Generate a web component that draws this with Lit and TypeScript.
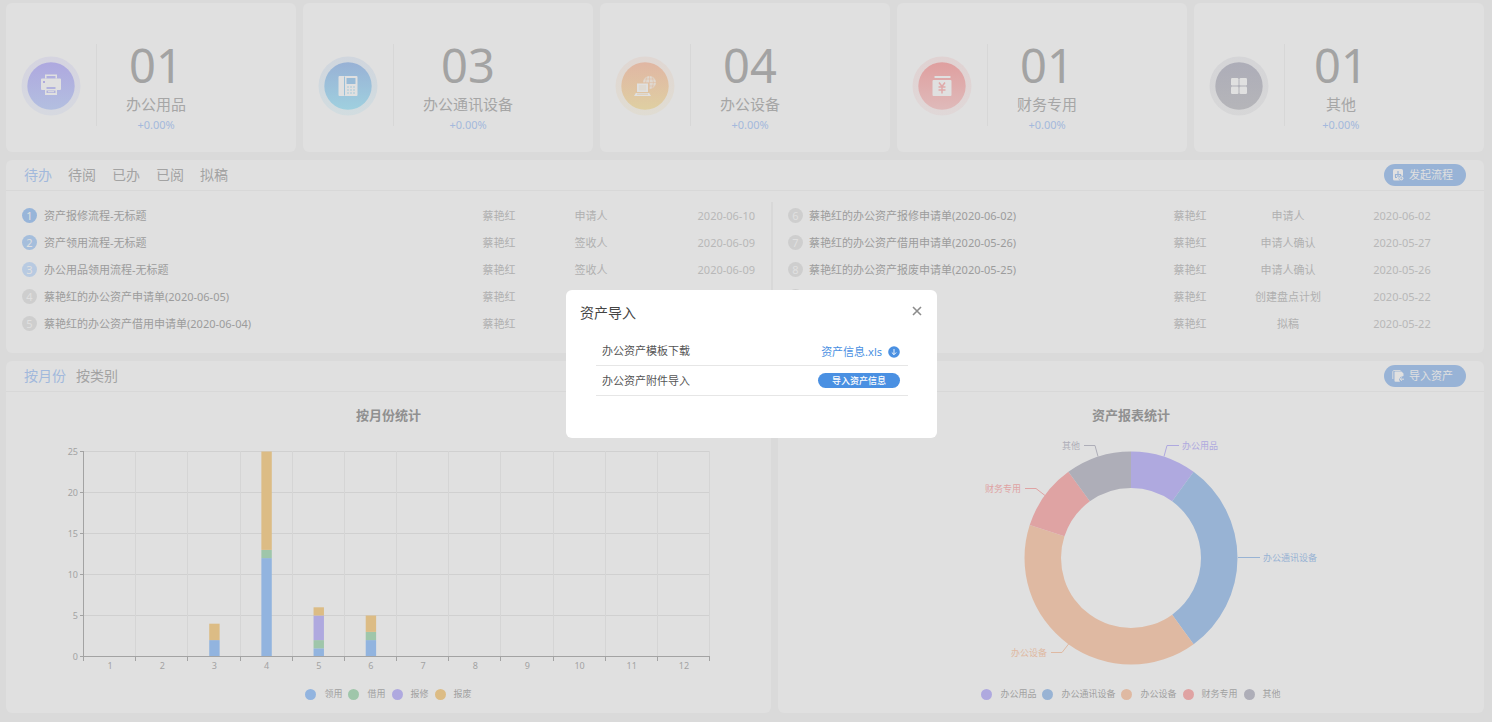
import { LitElement, html, svg, css } from "lit";
import { customElement, property, state } from "lit/decorators.js";
import { classMap } from "lit/directives/class-map.js";

type Tone = "violet" | "blue" | "orange" | "red" | "gray";

interface Stat {
  tone: Tone;
  count: string;
  label: string;
  change: string;
}

interface Task {
  no: number;
  title: string;
  person: string;
  step: string;
  date: string;
}

const STATS: Stat[] = [
  { tone: "violet", count: "01", label: "办公用品", change: "+0.00%" },
  { tone: "blue", count: "03", label: "办公通讯设备", change: "+0.00%" },
  { tone: "orange", count: "04", label: "办公设备", change: "+0.00%" },
  { tone: "red", count: "01", label: "财务专用", change: "+0.00%" },
  { tone: "gray", count: "01", label: "其他", change: "+0.00%" },
];

const TASKS_LEFT: Task[] = [
  { no: 1, title: "资产报修流程-无标题", person: "蔡艳红", step: "申请人", date: "2020-06-10" },
  { no: 2, title: "资产领用流程-无标题", person: "蔡艳红", step: "签收人", date: "2020-06-09" },
  { no: 3, title: "办公用品领用流程-无标题", person: "蔡艳红", step: "签收人", date: "2020-06-09" },
  { no: 4, title: "蔡艳红的办公资产申请单(2020-06-05)", person: "蔡艳红", step: "", date: "" },
  { no: 5, title: "蔡艳红的办公资产借用申请单(2020-06-04)", person: "蔡艳红", step: "", date: "" },
];

const TASKS_RIGHT: Task[] = [
  { no: 6, title: "蔡艳红的办公资产报修申请单(2020-06-02)", person: "蔡艳红", step: "申请人", date: "2020-06-02" },
  { no: 7, title: "蔡艳红的办公资产借用申请单(2020-05-26)", person: "蔡艳红", step: "申请人确认", date: "2020-05-27" },
  { no: 8, title: "蔡艳红的办公资产报废申请单(2020-05-25)", person: "蔡艳红", step: "申请人确认", date: "2020-05-26" },
  { no: 9, title: "", person: "蔡艳红", step: "创建盘点计划", date: "2020-05-22" },
  { no: 10, title: "", person: "蔡艳红", step: "拟稿", date: "2020-05-22" },
];

const SERIES = [
  { name: "领用", color: "#92b4df", data: [0, 0, 2, 12, 1, 2, 0, 0, 0, 0, 0, 0] },
  { name: "借用", color: "#9fc6aa", data: [0, 0, 0, 1, 1, 1, 0, 0, 0, 0, 0, 0] },
  { name: "报修", color: "#afa9df", data: [0, 0, 0, 0, 3, 0, 0, 0, 0, 0, 0, 0] },
  { name: "报废", color: "#dcbc85", data: [0, 0, 2, 12, 1, 2, 0, 0, 0, 0, 0, 0] },
];

const SLICES = [
  { name: "办公用品", color: "#afa9df", value: 1, line: "386,28 389,17 401,17", x: 404, y: 17, anchor: "start" },
  { name: "办公通讯设备", color: "#98b3d4", value: 3, line: "460,129 482,129", x: 485, y: 129, anchor: "start" },
  { name: "办公设备", color: "#dfb9a2", value: 4, line: "291,215 284,224 273,224", x: 269, y: 224, anchor: "end" },
  { name: "财务专用", color: "#dfa3a3", value: 1, line: "267,67 258,60 247,60", x: 243, y: 60, anchor: "end" },
  { name: "其他", color: "#aeaeb8", value: 1, line: "320,28 317,17 306,17", x: 302, y: 17, anchor: "end" },
];

const FONT = css`
  :host {
    font-family: "Noto Sans", "Noto Sans CJK SC", sans-serif;
  }
  * {
    box-sizing: border-box;
  }
`;

const GLYPHS = {
  violet: svg`
    <path d="M24 18.500h12v4h-1.500v-2.500h-9v2.500h-1.500z" fill="#e0e0e0"/>
    <path d="M21 22.500h18a1 1 0 0 1 1 1v9.500a1 1 0 0 1-1 1h-3v-4h-12v4h-3a1 1 0 0 1-1-1v-9.500a1 1 0 0 1 1-1z" fill="#e0e0e0"/>
    <rect x="22" y="25" width="2" height="2" fill="#b0abdc"/>
    <path d="M24 30h12v9h-12z" fill="#e0e0e0"/>
    <path d="M25.500 31h9v2h-9zM25.500 34.500h9v2.500h-9z" fill="#b2b3de"/>
    <path d="M27 35.200h6v1h-6z" fill="#e0e0e0"/>`,
  blue: svg`
    <rect x="20.500" y="20" width="19" height="20" rx="1" fill="#e0e0e0"/>
    <rect x="26" y="20.500" width="1" height="19" fill="#9ac0d8"/>
    <rect x="28.500" y="22" width="9" height="6" rx=".5" fill="#98bbd7"/>
    <path d="M29 31h2M32 31h2M35 31h2M29 34h2M32 34h2M35 34h2M29 37h2M32 37h2M35 37h2" stroke="#a5c9da" stroke-width="1.100"/>`,
  orange: svg`
    <circle cx="34.500" cy="26.500" r="6.500" fill="#e0d8cf"/>
    <path d="M34.500 20v13M28 26.500h13M29.500 23h10M29.500 30h10M32 20.500q-3 6 0 12M37 20.500q3 6 0 12" fill="none" stroke="#dfbea2" stroke-width=".6"/>
    <path d="M20.500 27h13.500v9.500h-13.500z" fill="#dfc2a2"/>
    <path d="M22 27.500h11v8.500h-11z" fill="#e0e0e0"/>
    <path d="M23.800 29h7.400v5.500h-7.400z" fill="#dfdad2"/>
    <path d="M20.800 37h13.400l1.800 3h-17z" fill="#e0e0e0"/>
    <path d="M22 38.200h11" stroke="#dfc7a3" stroke-width=".8"/>`,
  red: svg`
    <rect x="22.500" y="20" width="16" height="2" rx=".5" fill="#e0e0e0"/>
    <rect x="20.500" y="24" width="19" height="16" rx="1" fill="#e0e0e0"/>
    <path d="M27 26.500l3 4 3-4M30 30.500v7M26.500 31h7M26.500 34h7" fill="none" stroke="#dfa9a9" stroke-width="1.500"/>`,
  gray: svg`
    <g fill="#e0e0e0">
      <rect x="22" y="22" width="7.500" height="7.500" rx="1.200"/>
      <rect x="30.500" y="22" width="7.500" height="7.500" rx="1.200"/>
      <rect x="22" y="30.500" width="7.500" height="7.500" rx="1.200"/>
      <rect x="30.500" y="30.500" width="7.500" height="7.500" rx="1.200"/>
    </g>`,
};

const GRADIENTS: Record<Tone, [string, string]> = {
  violet: ["#aea8df", "#b3bfe0"],
  blue: ["#98b1d5", "#9fd0df"],
  orange: ["#e0b6a3", "#dfcfa2"],
  red: ["#df9f9f", "#dfbaba"],
  gray: ["#adadb8", "#b5b5b9"],
};

@customElement("stat-card")
class StatCard extends LitElement {
  @property({ attribute: false }) stat!: Stat;

  static styles = [
    FONT,
    css`
      :host {
        display: flex;
        align-items: flex-start;
        height: 149px;
        border-radius: 6px;
        background: #e0e0e0;
      }
      .badge {
        flex: none;
        width: 60px;
        height: 60px;
        margin: 53px 0 0 15px;
      }
      .rule {
        flex: none;
        width: 1px;
        height: 82px;
        margin: 41px 0 0 15px;
        background: #d7d7d7;
      }
      .figures {
        margin: 34px 0 0 29px;
        text-align: center;
        white-space: nowrap;
      }
      .count {
        font-size: 47px;
        line-height: 56px;
        color: #a3a3a3;
      }
      .label {
        font-size: 15px;
        line-height: 22px;
        color: #a6a6a6;
      }
      .change {
        font-size: 11px;
        line-height: 20px;
        color: #a4b9dc;
      }
    `,
  ];

  render() {
    const { tone, count, label, change } = this.stat;
    const [from, to] = GRADIENTS[tone];
    return html`
      <svg class="badge" viewBox="0 0 60 60" aria-hidden="true">
        <defs>
          <linearGradient id="g" x1="0" y1="0" x2="0" y2="1">
            <stop offset="0" stop-color=${from} />
            <stop offset="1" stop-color=${to} />
          </linearGradient>
        </defs>
        <circle cx="30" cy="30" r="29.500" fill="url(#g)" opacity=".22" />
        <circle cx="30" cy="30" r="23.700" fill="url(#g)" />
        ${GLYPHS[tone]}
      </svg>
      <div class="rule"></div>
      <div class="figures">
        <div class="count">${count}</div>
        <div class="label">${label}</div>
        <div class="change">${change}</div>
      </div>
    `;
  }
}

@customElement("task-table")
class TaskTable extends LitElement {
  @property({ attribute: false }) tasks: Task[] = [];
  @property({ type: Boolean, reflect: true }) centered = false;

  static styles = [
    FONT,
    css`
      :host {
        display: block;
      }
      .table {
        width: 100%;
        table-layout: fixed;
        border-collapse: collapse;
        font-size: 11px;
        line-height: 16px;
        color: #b0b0b0;
      }
      .cell {
        height: 27px;
        padding: 0;
        text-align: center;
        white-space: nowrap;
      }
      .no {
        width: 22px;
        text-align: left;
      }
      .title {
        text-align: left;
        color: #9c9c9c;
      }
      .person,
      .step {
        width: 92px;
      }
      .date {
        width: 118px;
        text-align: right;
        color: #b8b8b8;
      }
      :host([centered]) .no {
        width: 21px;
      }
      :host([centered]) .person,
      :host([centered]) .step {
        width: 98px;
      }
      :host([centered]) .date {
        width: 130px;
        text-align: center;
      }
      .dot {
        display: block;
        width: 15px;
        height: 15px;
        border-radius: 50%;
        background: #cecece;
        color: #e0e0e0;
        font-size: 11px;
        line-height: 15px;
        text-align: center;
      }
      .first {
        background: #98b5d9;
      }
      .second {
        background: #a5bedc;
      }
      .third {
        background: #b8cae1;
      }
    `,
  ];

  render() {
    return html`
      <table class="table">
        <tbody>
          ${this.tasks.map(
            (t) => html`
              <tr>
                <td class="cell no">
                  <span
                    class=${classMap({
                      dot: true,
                      first: t.no === 1,
                      second: t.no === 2,
                      third: t.no === 3,
                    })}
                    >${t.no}</span
                  >
                </td>
                <td class="cell title">${t.title}</td>
                <td class="cell person">${t.person}</td>
                <td class="cell step">${t.step}</td>
                <td class="cell date">${t.date}</td>
              </tr>
            `
          )}
        </tbody>
      </table>
    `;
  }
}

const CHART = [
  FONT,
  css`
    :host {
      display: block;
      padding: 13px 0 11px;
    }
    .heading {
      margin: 0;
      font-size: 13px;
      font-weight: 700;
      line-height: 20px;
      text-align: center;
      color: #909090;
    }
    .plot {
      display: block;
      width: 100%;
      font-size: 9px;
    }
    .legend {
      display: flex;
      justify-content: center;
      gap: 6px;
      margin: 0;
      padding: 0;
      list-style: none;
      font-size: 9px;
      line-height: 16px;
      color: #a0a0a0;
    }
    .entry {
      display: flex;
      align-items: center;
      gap: 8px;
    }
    .swatch {
      width: 11px;
      height: 11px;
      border-radius: 50%;
    }
  `,
];

const legend = (items: { name: string; color: string }[]) => html`
  <ul class="legend">
    ${items.map(
      (i) => html`<li class="entry"><span class="swatch" style="background:${i.color}"></span>${i.name}</li>`
    )}
  </ul>
`;

@customElement("month-chart")
class MonthChart extends LitElement {
  static styles = CHART;

  render() {
    const left = 78;
    const right = 704;
    const base = 231;
    const unit = 8.2;
    const step = (right - left) / 12;
    const columns = Array.from({ length: 12 }, (_, i) => i);
    const marks = [0, 5, 10, 15, 20, 25];
    return html`
      <h2 class="heading">按月份统计</h2>
      <svg class="plot" viewBox="0 0 765 261" role="img" aria-label="按月份统计">
        ${marks.map((m) => {
          const y = Math.round(base - m * unit) + 0.5;
          return svg`
            <path d="M${left} ${y}H${right}" stroke="#d0d0d0"/>
            <path d="M${left - 4} ${y}H${left}" stroke="#a3a3a3"/>
            <text x=${left - 6} y=${y + 3} text-anchor="end" fill="#a3a3a3">${m}</text>`;
        })}
        ${columns.map((i) => {
          const x = Math.round(left + (i + 1) * step) - 0.5;
          return svg`
            <path d="M${x} 26V${base}" stroke="#d5d5d5"/>
            <path d="M${x} ${base}v5" stroke="#a3a3a3"/>
            <text x=${left + (i + 0.5) * step} y="244" text-anchor="middle" fill="#a3a3a3">${i + 1}</text>`;
        })}
        ${columns.map((i) => {
          let sum = 0;
          return SERIES.map((s) => {
            const v = s.data[i];
            sum += v;
            return v
              ? svg`<rect x=${left + (i + 0.5) * step - 5.2} y=${base + 0.5 - sum * unit} width="10.400" height=${v * unit} fill=${s.color}/>`
              : null;
          });
        })}
        <path d="M${left - 0.5} 26V${base + 5}M${left - 1} ${base + 0.5}H${right}" stroke="#a3a3a3" fill="none"/>
      </svg>
      ${legend(SERIES)}
    `;
  }
}

@customElement("asset-chart")
class AssetChart extends LitElement {
  static styles = CHART;

  render() {
    const cx = 353;
    const cy = 133;
    const outer = 106.5;
    const inner = 70;
    const total = SLICES.reduce((n, s) => n + s.value, 0);
    const at = (r: number, turn: number) => {
      const a = turn * Math.PI * 2;
      return `${(cx + r * Math.sin(a)).toFixed(2)} ${(cy - r * Math.cos(a)).toFixed(2)}`;
    };
    let turn = 0;
    return html`
      <h2 class="heading">资产报表统计</h2>
      <svg class="plot" viewBox="0 0 706 261" role="img" aria-label="资产报表统计">
        ${SLICES.map((s) => {
          const a = turn;
          const b = (turn += s.value / total);
          return svg`
            <path fill=${s.color} d="M${at(outer, a)}A${outer} ${outer} 0 0 1 ${at(outer, b)}L${at(inner, b)}A${inner} ${inner} 0 0 0 ${at(inner, a)}Z"/>`;
        })}
        ${SLICES.map(
          (s) => svg`
            <polyline points=${s.line} transform="translate(0 3.500)" fill="none" stroke=${s.color}/>
            <text x=${s.x} y=${s.y + 7} text-anchor=${s.anchor} fill=${s.color}>${s.name}</text>`
        )}
      </svg>
      ${legend(SLICES)}
    `;
  }
}

@customElement("import-dialog")
class ImportDialog extends LitElement {
  static styles = [
    FONT,
    css`
      :host {
        position: fixed;
        inset: 0;
        display: flex;
        align-items: center;
        justify-content: center;
        padding: 6px 0 0 11px;
        box-sizing: border-box;
      }
      .dialog {
        width: 371px;
        padding: 0 29px 42px 30px;
        border-radius: 6px;
        background: #fff;
        color: #555;
      }
      .top {
        display: flex;
        align-items: center;
        justify-content: space-between;
        height: 46px;
        margin: 0 -15px 0 -16px;
      }
      .name {
        margin: 0;
        font-size: 14px;
        font-weight: 400;
        line-height: 20px;
        color: #444;
      }
      .close {
        width: 12px;
        height: 12px;
        margin: 0 0 4px;
        padding: 0;
        border: 0;
        background: none;
      }
      .icon {
        display: block;
        width: 12px;
        height: 12px;
      }
      .line {
        display: flex;
        align-items: center;
        justify-content: space-between;
        height: 30px;
        padding: 0 8px 0 6px;
        border-bottom: 1px solid #e6e6e6;
        font-size: 11px;
        line-height: 16px;
      }
      .link {
        display: flex;
        align-items: center;
        gap: 6px;
        padding-top: 2px;
        color: #4a90e2;
        text-decoration: none;
      }
      .upload {
        width: 82px;
        height: 15px;
        padding: 0;
        border: 0;
        border-radius: 8px;
        background: #4a90e2;
        color: #fff;
        font-family: inherit;
        font-size: 9px;
        font-weight: 500;
        line-height: 15px;
      }
    `,
  ];

  render() {
    return html`
      <section class="dialog" role="dialog" aria-labelledby="name">
        <header class="top">
          <h2 class="name" id="name">资产导入</h2>
          <button class="close" type="button" aria-label="关闭">
            <svg class="icon" viewBox="0 0 12 12">
              <path d="M2 2l8 8M10 2l-8 8" stroke="#8c8c8c" stroke-width="1.600" />
            </svg>
          </button>
        </header>
        <div class="line">
          <span>办公资产模板下载</span>
          <a class="link" href="#">
            资产信息.xls
            <svg class="icon" viewBox="0 0 12 12" aria-hidden="true">
              <circle cx="6" cy="6" r="5.800" fill="#4a90e2" />
              <path d="M6 3v5.500M3.800 6.500L6 8.700l2.200-2.200" fill="none" stroke="#fff" stroke-width=".9" />
            </svg>
          </a>
        </div>
        <div class="line">
          <span>办公资产附件导入</span>
          <button class="upload" type="button">导入资产信息</button>
        </div>
      </section>
    `;
  }
}

@customElement("app-root")
class AppRoot extends LitElement {
  @state() private taskTab = "待办";
  @state() private chartTab = "按月份";

  static styles = [
    FONT,
    css`
      :host {
        display: block;
        min-height: 100vh;
        padding: 3px 8px 9px 6px;
        box-sizing: border-box;
        background: #dadada;
      }
      .page {
        display: grid;
        gap: 8px;
      }
      .stats {
        display: grid;
        grid-template-columns: repeat(5, 1fr);
        gap: 7px;
      }
      .panel {
        border-radius: 6px;
        background: #e0e0e0;
      }
      .bar {
        display: flex;
        align-items: center;
        justify-content: space-between;
        height: 31px;
        padding: 0 18px;
        border-bottom: 1px solid #d8d8d8;
      }
      .tabs {
        display: flex;
        gap: 16px;
      }
      .tight {
        gap: 10px;
      }
      .tab {
        padding: 0;
        border: 0;
        background: none;
        color: #a3a3a3;
        font-family: inherit;
        font-size: 14px;
        line-height: 20px;
      }
      .active {
        color: #a2b9dc;
      }
      .action {
        display: flex;
        align-items: center;
        gap: 5px;
        height: 22px;
        padding: 0 13px 0 8px;
        border: 0;
        border-radius: 11px;
        background: #98b3d6;
        color: #e0e0e0;
        font-family: inherit;
        font-size: 11px;
        line-height: 16px;
      }
      .glyph {
        width: 12px;
        height: 12px;
      }
      .lists {
        display: grid;
        grid-template-columns: 765fr 713fr;
        padding: 11px 0 16px;
      }
      .left {
        padding: 0 16px;
      }
      .right {
        padding: 0 17px 0 15px;
        border-left: 2px solid #d8d8d8;
      }
      .charts {
        display: grid;
        grid-template-columns: 765fr 706fr;
        column-gap: 7px;
      }
      .flat-right {
        border-top-right-radius: 0;
      }
      .flat-left {
        border-top-left-radius: 0;
      }
      .end {
        justify-content: flex-end;
      }
    `,
  ];

  private tabs(names: string[], active: string, pick: (name: string) => void) {
    return names.map(
      (n) => html`<button type="button" class=${classMap({ tab: true, active: n === active })} @click=${() => pick(n)}>${n}</button>`
    );
  }

  render() {
    return html`
      <main class="page">
        <section class="stats">${STATS.map((s) => html`<stat-card .stat=${s}></stat-card>`)}</section>
        <section class="panel">
          <header class="bar">
            <nav class="tabs">
              ${this.tabs(["待办", "待阅", "已办", "已阅", "拟稿"], this.taskTab, (n) => (this.taskTab = n))}
            </nav>
            <button class="action" type="button">
              <svg class="glyph" viewBox="0 0 12 12" aria-hidden="true">
                <rect x="1" y="0" width="10" height="11.500" rx="1.500" fill="#e0e0e0" />
                <path d="M6 2v3M3.500 8V5.500h5V8M3 8.500h2M6 5v3" fill="none" stroke="#98b3d6" stroke-width="1.200" />
                <circle cx="9.300" cy="9.300" r="2.700" fill="#98b3d6" />
                <circle cx="9.300" cy="9.300" r="2.100" fill="#e0e0e0" />
                <path d="M9.300 8.200v2.200M8.200 9.300h2.200" stroke="#98b3d6" stroke-width=".7" />
              </svg>
              发起流程
            </button>
          </header>
          <div class="lists">
            <div class="left"><task-table .tasks=${TASKS_LEFT}></task-table></div>
            <div class="right"><task-table centered .tasks=${TASKS_RIGHT}></task-table></div>
          </div>
        </section>
        <section class="charts">
          <div class="panel flat-right">
            <header class="bar">
              <nav class="tabs tight">
                ${this.tabs(["按月份", "按类别"], this.chartTab, (n) => (this.chartTab = n))}
              </nav>
            </header>
            <month-chart></month-chart>
          </div>
          <div class="panel flat-left">
            <header class="bar end">
              <button class="action" type="button">
                <svg class="glyph" viewBox="0 0 12 12" aria-hidden="true">
                  <path d="M.8 9V1.500A1 1 0 0 1 1.800.600H8.500" fill="none" stroke="#e0e0e0" stroke-width=".9" />
                  <path d="M3 1.500h6.500l2 2V6L8.500 7 7 9.500l1 2.300H3.500a1 1 0 0 1-1-1V2z" fill="#e0e0e0" />
                  <path d="M12 9.200H8.300M9.800 7.500L8.100 9.200l1.700 1.700" fill="none" stroke="#e0e0e0" stroke-width="1" />
                </svg>
                导入资产
              </button>
            </header>
            <asset-chart></asset-chart>
          </div>
        </section>
      </main>
      <import-dialog></import-dialog>
    `;
  }
}
